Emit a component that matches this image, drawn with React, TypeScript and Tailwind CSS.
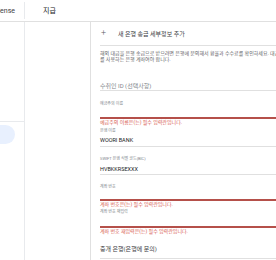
export default function App() {
  const font = { fontFamily: "Roboto, 'Noto Sans CJK KR', sans-serif" };
  return (
    <div
      className="w-[276px] h-[260px] overflow-hidden bg-white text-[#3c4043]"
      style={font}
    >
      {/* header */}
      <div className="h-[22px] border-b border-[#e0e0e0] flex items-center">
        <div className="w-[24px] h-full flex items-center justify-end overflow-hidden pr-[9px]">
          <span className="text-[7px] leading-[8px] whitespace-nowrap">AdSense</span>
        </div>
        <div className="w-px h-[17px] bg-[#e8eaed]" />
        <span className="ml-[18px] text-[7px] leading-[8px] text-[#202124]">지급</span>
      </div>

      <div className="flex h-[238px]">
        {/* sidebar */}
        <div className="w-[25px] shrink-0 border-r border-[#e8eaed] flex flex-col">
          <div className="h-[100px] border-b border-[#e8eaed]" />
          <div className="mt-[3px] h-[19px] w-[15px] rounded-r-full bg-[#e8f0fe]" />
        </div>

        {/* middle column */}
        <div className="w-[66px] shrink-0 border-r border-[#e0e0e0]" />

        {/* form */}
        <div className="flex-1 min-w-0 pl-[9px] flex flex-col overflow-hidden">
          <div className="h-[24px] shrink-0 border-b border-[#e0e0e0] flex items-center">
            <span className="w-[18px] pl-[1px] text-[9px] leading-[9px] font-light text-[#5f6368]">+</span>
            <span className="text-[6px] leading-[8px] whitespace-nowrap">새 은행 송금 세부정보 추가</span>
          </div>

          <div className="pt-[4px] text-[5px] leading-[6px] text-[#5f6368] whitespace-nowrap">
            <div>해외 대금을 은행 송금으로 받으려면 은행에 문의해서 환율과 수수료를 확인하세요. 대금 수령</div>
            <div>를 사용하는 은행 계좌여야 합니다.</div>
          </div>

          <div className="mt-[20px] h-[9px] shrink-0 border-b border-[#e0e0e0] text-[6px] leading-[8px] text-[#80868b] whitespace-nowrap">
            수취인 ID (선택사항)
          </div>

          <div className="mt-[10px] text-[4px] leading-[6px] text-[#80868b]">예금주의 이름</div>
          <div className="h-[12px] shrink-0 border-b-2 border-[#b5504a]" />
          <div className="text-[5px] leading-[6px] text-[#d75a50] whitespace-nowrap">
            예금주의 이름은(는) 필수 입력란입니다.
          </div>

          <div className="mt-[3px] text-[4px] leading-[6px] text-[#80868b]">은행 이름</div>
          <div className="pt-[2px] h-[13px] shrink-0 border-b border-[#e0e0e0] text-[5.5px] leading-[8px] text-[#202124]">
            WOORI BANK
          </div>

          <div className="mt-[9px] text-[4px] leading-[6px] text-[#80868b] whitespace-nowrap">
            SWIFT 은행 식별 코드(BIC)
          </div>
          <div className="pt-[3px] h-[13px] shrink-0 border-b border-[#e0e0e0] text-[5.5px] leading-[8px] text-[#202124]">
            HVBKKRSEXXX
          </div>

          <div className="mt-[9px] text-[4px] leading-[6px] text-[#80868b]">계좌 번호</div>
          <div className="h-[11px] shrink-0 border-b-2 border-[#b5504a]" />
          <div className="text-[5px] leading-[6px] text-[#d75a50] whitespace-nowrap">
            계좌 번호은(는) 필수 입력란입니다.
          </div>

          <div className="mt-[2px] text-[4px] leading-[6px] text-[#80868b]">계좌 번호 재입력</div>
          <div className="h-[13px] shrink-0 border-b-2 border-[#b5504a]" />
          <div className="text-[5px] leading-[6px] text-[#d75a50] whitespace-nowrap">
            계좌 번호 재입력은(는) 필수 입력란입니다.
          </div>

          <div className="mt-[10px] h-[15px] shrink-0 border-b border-[#e0e0e0] text-[6px] leading-[10px] whitespace-nowrap">
            중개 은행(은행에 문의)
          </div>
        </div>
      </div>
    </div>
  );
}
